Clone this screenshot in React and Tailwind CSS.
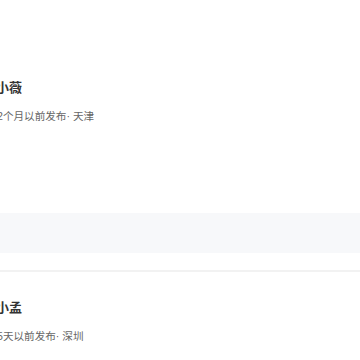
import React from "react";

const posts = [
  { name: "小薇", meta: "2个月以前发布· 天津" },
  { name: "小孟", meta: "5天以前发布· 深圳" },
];

function Author({ name, meta }) {
  return (
    <div>
      <p className="ml-[-4px] text-[13px] leading-[20px] font-semibold text-[#333]">{name}</p>
      <p className="ml-[-3px] mt-[10px] text-[10.6px] leading-[16px] text-[#666]">{meta}</p>
    </div>
  );
}

export default function App() {
  return (
    <div className="w-[360px] h-[360px] overflow-hidden bg-white" style={{ fontFamily: '"Liberation Sans", "Noto Sans CJK SC", sans-serif' }}>
      <section className="h-[213px] pt-[78px]">
        <Author {...posts[0]} />
      </section>
      <div className="h-[40px] bg-[#f7f8fa]" />
      <div className="h-[17px]" />
      <div className="h-[2px] bg-[#f2f2f2]" />
      <section className="pt-[26px]">
        <Author {...posts[1]} />
      </section>
    </div>
  );
}
